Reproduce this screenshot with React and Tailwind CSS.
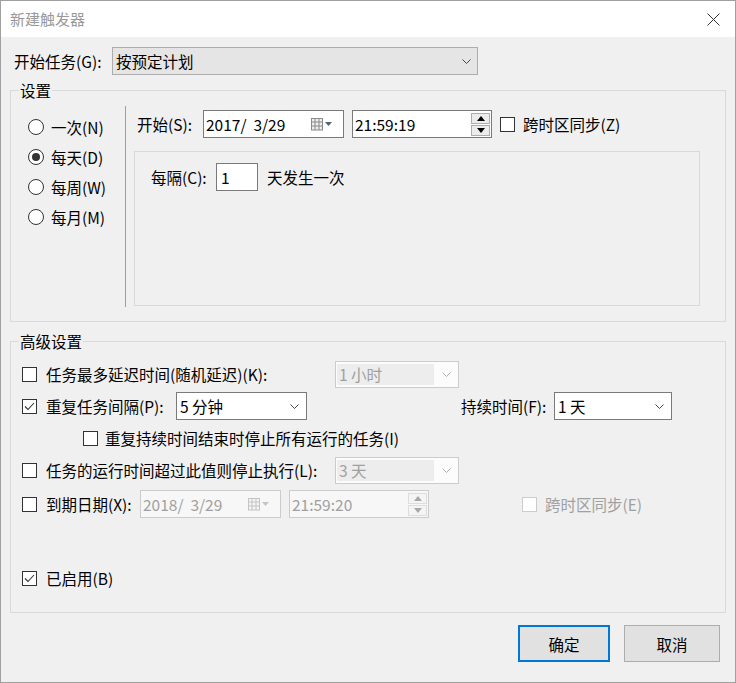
import React from "react";

const font = "font-['Noto_Sans_CJK_SC','Microsoft_YaHei',sans-serif]";

function Chevron({ color = "#444" }) {
  return (
    <svg width="9" height="5" viewBox="0 0 9 5" className="shrink-0">
      <polyline points="0.5,0.5 4.5,4.5 8.5,0.5" fill="none" stroke={color} strokeWidth="1" />
    </svg>
  );
}

function Check({ checked, disabled }) {
  return (
    <span
      className={
        "flex h-[15px] w-[15px] shrink-0 items-center justify-center border bg-white " +
        (disabled ? "border-[#cccccc]" : "border-[#333333]")
      }
    >
      {checked ? (
        <svg width="13" height="13" viewBox="0 0 13 13">
          <polyline points="2,6.5 5,9.5 11,3" fill="none" stroke="#333" strokeWidth="1.1" />
        </svg>
      ) : null}
    </span>
  );
}

function Radio({ on, label }) {
  return (
    <div className="flex h-[30px] items-center">
      <span className="flex h-[16px] w-[16px] items-center justify-center rounded-full border border-[#333333] bg-white">
        {on ? <span className="h-[8px] w-[8px] rounded-full bg-[#333333]" /> : null}
      </span>
      <span className="ml-[7px]">{label}</span>
    </div>
  );
}

function Combo({ value, w, disabled }) {
  if (disabled) {
    return (
      <div className={"flex h-[27px] items-center border border-[#cccccc] bg-[#fcfcfc] text-[#a0a0a0] " + w}>
        <div className="ml-[1px] flex h-[21px] flex-1 items-center bg-[#ededed] pl-[2px]">{value}</div>
        <div className="flex w-[24px] justify-center">
          <Chevron color="#b0b0b0" />
        </div>
      </div>
    );
  }
  return (
    <div className={"flex h-[28px] items-center justify-between border border-[#7a7a7a] bg-white pl-[3px] pr-[7px] " + w}>
      <span>{value}</span>
      <Chevron />
    </div>
  );
}

function CalIcon({ disabled }) {
  const c = disabled ? "#c4c4c4" : "#8a8a8a";
  return (
    <svg width="22" height="13" viewBox="0 0 22 13" className="shrink-0">
      <rect x="0.5" y="0.5" width="11" height="11.5" fill={disabled ? "#f4f4f4" : "#eeeeee"} stroke={c} />
      <line x1="4" y1="1" x2="4" y2="12" stroke={c} />
      <line x1="8" y1="1" x2="8" y2="12" stroke={c} />
      <line x1="1" y1="4" x2="11" y2="4" stroke={c} />
      <line x1="1" y1="8" x2="11" y2="8" stroke={c} />
      <polygon points="14,4 21,4 17.5,8" fill={disabled ? "#c4c4c4" : "#53607a"} />
    </svg>
  );
}

function DateBox({ value, disabled }) {
  return (
    <div
      className={
        "flex h-[28px] w-[141px] items-center justify-between border pl-[2px] pr-[10px] " +
        (disabled ? "border-[#cccccc] bg-[#f7f7f7] text-[#a0a0a0]" : "border-[#7a7a7a] bg-white")
      }
    >
      <span className="whitespace-pre">{value}</span>
      <CalIcon disabled={disabled} />
    </div>
  );
}

function Spin({ disabled }) {
  const b = disabled ? "border-[#dddddd] bg-[#f4f4f4]" : "border-[#adadad] bg-[#ececec]";
  const f = disabled ? "#a8a8a8" : "#000";
  return (
    <div className="flex flex-col gap-[1px]">
      <div className={"flex h-[11px] w-[19px] items-center justify-center border " + b}>
        <svg width="8" height="5" viewBox="0 0 8 5">
          <polygon points="0,5 8,5 4,0" fill={f} />
        </svg>
      </div>
      <div className={"flex h-[11px] w-[19px] items-center justify-center border " + b}>
        <svg width="8" height="5" viewBox="0 0 8 5">
          <polygon points="0,0 8,0 4,5" fill={f} />
        </svg>
      </div>
    </div>
  );
}

function TimeBox({ value, disabled }) {
  return (
    <div
      className={
        "flex h-[28px] w-[140px] items-center justify-between border pl-[2px] pr-[1px] " +
        (disabled ? "border-[#cccccc] bg-[#f7f7f7] text-[#a0a0a0]" : "border-[#7a7a7a] bg-white")
      }
    >
      <span>{value}</span>
      <Spin disabled={disabled} />
    </div>
  );
}

export default function App() {
  return (
    <div className={"h-[683px] w-[736px] overflow-hidden border border-[#a0a0a0] bg-[#f0f0f0] text-[15.5px] leading-[20px] text-black " + font}>
      {/* title bar */}
      <div className="flex h-[36px] items-center justify-between bg-white pl-[9px] pr-[15px]">
        <span className="text-[15px] text-[#999999]">新建触发器</span>
        <svg width="13" height="13" viewBox="0 0 13 13">
          <line x1="0.5" y1="0.5" x2="12.5" y2="12.5" stroke="#333" strokeWidth="1" />
          <line x1="12.5" y1="0.5" x2="0.5" y2="12.5" stroke="#333" strokeWidth="1" />
        </svg>
      </div>

      <div className="mt-[10px] flex items-center pl-[13px]">
        <span className="w-[98px]">开始任务(G):</span>
        <div className="flex h-[28px] w-[366px] items-center justify-between border border-[#adadad] bg-[#e5e5e5] pl-[3px] pr-[6px]">
          <span>按预定计划</span>
          <Chevron />
        </div>
      </div>

      <fieldset className="ml-[9px] mt-[5px] w-[716px] border border-[#d9d9d9]">
        <legend className="ml-[8px] px-[1px]">设置</legend>
        <div className="flex pb-[14px] pt-[6px]">
          <div className="w-[114px] pl-[17px] pt-[6px]">
            <Radio label="一次(N)" />
            <Radio on label="每天(D)" />
            <Radio label="每周(W)" />
            <Radio label="每月(M)" />
          </div>
          <div className="border-l border-[#a0a0a0] pb-[1px] pl-[8px]">
            <div className="mt-[4px] flex h-[28px] items-center">
              <span className="w-[69px] pl-[3px]">开始(S):</span>
              <DateBox value="2017/  3/29" />
              <div className="ml-[8px]">
                <TimeBox value="21:59:19" />
              </div>
              <div className="ml-[8px]">
                <Check />
              </div>
              <span className="ml-[8px]">跨时区同步(Z)</span>
            </div>
            <div className="mt-[13px] h-[155px] w-[566px] border border-[#d9d9d9] pl-[16px] pt-[11px]">
              <div className="flex h-[28px] items-center">
                <span className="w-[65px]">每隔(C):</span>
                <div className="flex h-[28px] w-[42px] items-center border border-[#7a7a7a] bg-white pl-[4px]">1</div>
                <span className="ml-[9px]">天发生一次</span>
              </div>
            </div>
          </div>
        </div>
      </fieldset>

      <fieldset className="ml-[9px] mt-[9px] w-[716px] border border-[#d9d9d9] pb-[20px] pl-[11px]">
        <legend className="ml-[-3px] px-[1px]">高级设置</legend>

        <div className="mt-[9px] flex h-[28px] items-center">
          <Check />
          <span className="ml-[9px] w-[289px]">任务最多延迟时间(随机延迟)(K):</span>
          <Combo value="1 小时" w="w-[124px]" disabled />
        </div>

        <div className="mt-[4px] flex h-[28px] items-center">
          <Check checked />
          <span className="ml-[9px] w-[130px]">重复任务间隔(P):</span>
          <Combo value="5 分钟" w="w-[131px]" />
          <span className="ml-[154px] w-[93px]">持续时间(F):</span>
          <Combo value="1 天" w="w-[118px]" />
        </div>

        <div className="mt-[4px] flex h-[28px] items-center pl-[61px]">
          <Check />
          <span className="ml-[7px]">重复持续时间结束时停止所有运行的任务(I)</span>
        </div>

        <div className="mt-[4px] flex h-[28px] items-center">
          <Check />
          <span className="ml-[9px] w-[289px]">任务的运行时间超过此值则停止执行(L):</span>
          <Combo value="3 天" w="w-[124px]" disabled />
        </div>

        <div className="mt-[6px] flex h-[28px] items-center">
          <Check />
          <span className="ml-[9px] w-[94px]">到期日期(X):</span>
          <DateBox value="2018/  3/29" disabled />
          <div className="ml-[8px]">
            <TimeBox value="21:59:20" disabled />
          </div>
          <div className="ml-[93px]">
            <Check disabled />
          </div>
          <span className="ml-[8px] text-[#a0a0a0]">跨时区同步(E)</span>
        </div>

        <div className="mt-[46px] flex h-[28px] items-center">
          <Check checked />
          <span className="ml-[9px]">已启用(B)</span>
        </div>
      </fieldset>

      <div className="mt-[12px] flex justify-end gap-[14px] pr-[15px]">
        <button className="flex h-[37px] w-[92px] items-center justify-center border-2 border-[#0078d7] bg-[#e1e1e1]">
          确定
        </button>
        <button className="flex h-[37px] w-[96px] items-center justify-center border border-[#adadad] bg-[#e1e1e1]">
          取消
        </button>
      </div>
    </div>
  );
}
